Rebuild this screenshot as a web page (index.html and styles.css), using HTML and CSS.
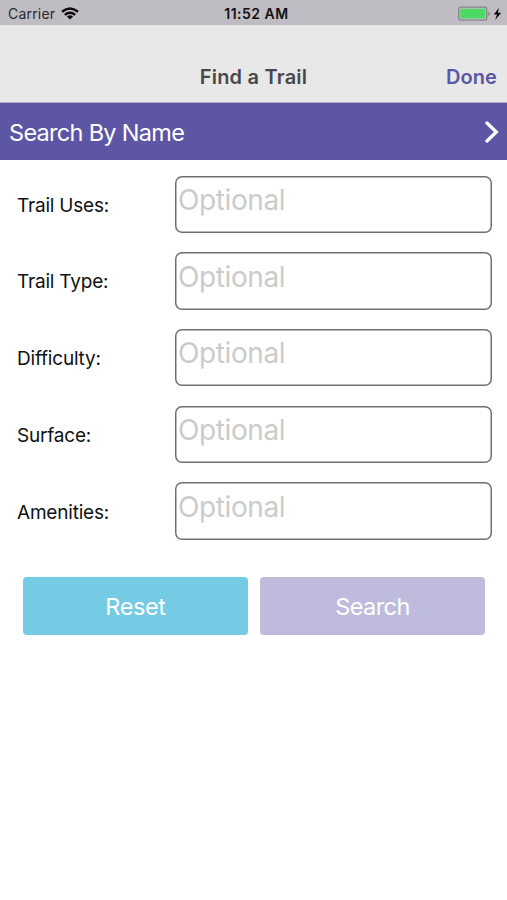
FILE: index.html
```html
<!DOCTYPE html>
<html lang="en">
<head>
<meta charset="utf-8">
<title>Find a Trail</title>
<link rel="stylesheet" href="styles.css">
</head>
<body>
<div class="status">
  <div class="carrier"><span class="carrier-name">Carrier</span>
    <svg class="wifi" width="18" height="13" viewBox="0 0 18 13" fill="none" stroke="#0b0b0d" stroke-width="2.4"><path d="M1 4.7Q9-1.8 17 4.7"/><path d="M3.8 7.8Q9 3.5 14.2 7.8"/><path d="M9 12.5 5.9 9.6Q9 7 12.1 9.6Z" fill="#0b0b0d" stroke="none"/></svg>
  </div>
  <span class="time">11:52 AM</span>
  <div class="power">
    <svg width="44" height="16" viewBox="0 0 44 16"><rect x=".7" y="1.2" width="28" height="13" rx="2.5" fill="#c3c1c7" stroke="#858388" stroke-width="1.3"/><rect x="2.3" y="2.8" width="24.8" height="9.8" rx="1" fill="#4cd964"/><path d="M30.3 5.4Q32 6 32 7.8T30.3 10.2Z" fill="#858388"/><path d="M41 1.8 35.8 8.6H39L37.2 14 43.2 6.8H39.8Z" fill="#08080a"/></svg>
  </div>
</div>
<header class="nav"><span></span><h1 class="title">Find a Trail</h1><a class="done">Done</a></header>
<a class="by-name"><span class="by-name-text">Search By Name</span>
  <svg width="14" height="22" viewBox="0 0 14 22" fill="none" stroke="#fff" stroke-width="3.3" stroke-linecap="round"><path d="M2 2 11.3 11 2 20"/></svg>
</a>
<form class="form">
  <label class="row"><span class="label">Trail Uses:</span><span class="field">Optional</span></label>
  <label class="row"><span class="label">Trail Type:</span><span class="field">Optional</span></label>
  <label class="row"><span class="label">Difficulty:</span><span class="field">Optional</span></label>
  <label class="row"><span class="label">Surface:</span><span class="field">Optional</span></label>
  <label class="row"><span class="label">Amenities:</span><span class="field">Optional</span></label>
</form>
<div class="actions"><button class="button reset">Reset</button><button class="button search">Search</button></div>
</body>
</html>
```
FILE: styles.css
```css
* { box-sizing: border-box; }
body { margin: 0; min-height: 900px; background: #fff; color: #111; font-family: Inter, "Liberation Sans", sans-serif; }
.status { display: grid; grid-template-columns: 1fr auto 1fr; align-items: center; height: 25px; padding: 2px 5px 0 8px; background: #bfbdc3; font-size: 14px; }
.carrier { display: flex; align-items: center; gap: 6px; }
.carrier-name { font-size: 14px; letter-spacing: .2px; color: #29282c; }
.time { font-weight: 600; letter-spacing: .5px; padding-left: 3px; }
.power { display: flex; justify-content: flex-end; }
.nav { display: grid; grid-template-columns: 1fr auto 1fr; align-items: center; height: 78px; padding: 27px 10px 0; background: #e8e8e8; border-bottom: 1px solid #b3b1c4; }
.title { margin: 0; font-size: 20px; font-weight: 600; color: #48484a; letter-spacing: .2px; }
.done { justify-self: end; font-size: 20px; font-weight: 600; color: #5c56a5; letter-spacing: .1px; }
.by-name { display: flex; align-items: center; justify-content: space-between; height: 57px; padding: 0 8px 0 9px; background: #5c56a5; color: #fff; }
.by-name-text { padding-top: 1px; font-size: 23.5px; letter-spacing: -.7px; }
.form { display: grid; grid-auto-rows: 57.6px; row-gap: 19.1px; padding: 15.5px 15.5px 0 17px; }
.row { display: grid; grid-template-columns: 157.5px 1fr; align-items: center; }
.label { padding-top: 2px; font-size: 19px; letter-spacing: -.2px; }
.field { height: 57.6px; padding: 7.5px 0 0 3.5px; box-shadow: inset 0 0 0 1.5px #707070; border-radius: 7px; color: #cbcbcb; font-size: 28px; line-height: 34px; letter-spacing: -.4px; }
.actions { display: grid; grid-template-columns: 1fr 1fr; gap: 12px; padding: 37.5px 22px 0 23px; }
.button { height: 57.5px; padding: 1px 0 0; border: 0; border-radius: 4px; color: #fff; font: 23.5px Inter, "Liberation Sans", sans-serif; letter-spacing: -.6px; }
.reset { background: #76cbe4; letter-spacing: -.4px; }
.search { background: #bfbbdc; }
```
